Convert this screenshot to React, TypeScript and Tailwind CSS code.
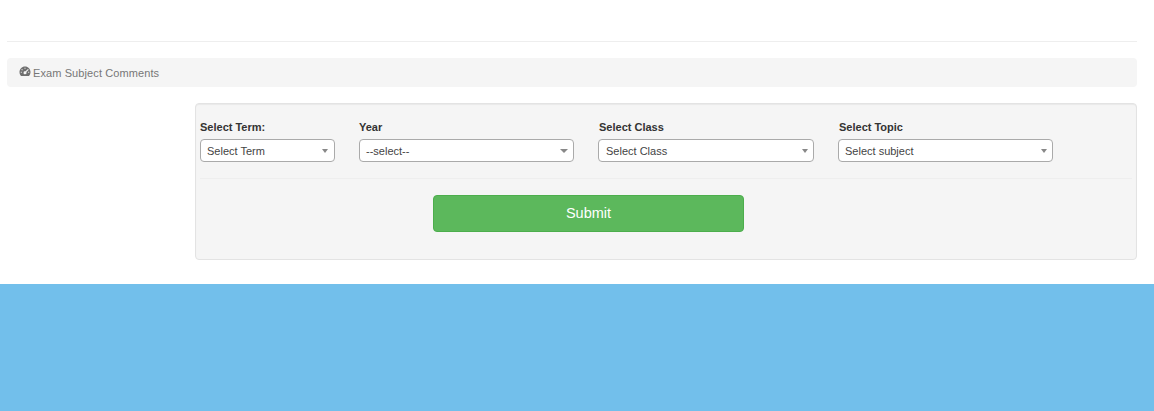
const fields = [
  { label: "Select Term:", value: "Select Term", width: "w-[135px]", labelPad: "pl-0", box: "pl-[6px] pr-[6px]", caret: "border-x-[3px] border-t-[4px]" },
  { label: "Year", value: "--select--", width: "w-[215px]", labelPad: "pl-0", box: "pl-[6px] pr-[5px]", caret: "border-x-[4px] border-t-[4px]" },
  { label: "Select Class", value: "Select Class", width: "w-[216px]", labelPad: "pl-[1px]", box: "pl-[7px] pr-[5px]", caret: "border-x-[3px] border-t-[4px]" },
  { label: "Select Topic", value: "Select subject", width: "w-[215px]", labelPad: "pl-[1px]", box: "pl-[6px] pr-[5px]", caret: "border-x-[3px] border-t-[4px]" },
];

function DashboardIcon() {
  return (
    <svg viewBox="0 0 12 11" className="mb-[4px] mr-[2px] h-[11px] w-[12px] text-[#6f6f6f]">
      <path
        fill="currentColor"
        fillRule="evenodd"
        d="M6 .5C2.800.5.500 3 .500 6c0 1.600.600 3 1.600 4h7.800c1-1 1.600-2.400 1.600-4C11.500 3 9.200.5 6 .5ZM5.500 1.800h1v1h-1ZM3 3l.8.7-.7.8-.8-.7ZM9 3l.7.7-2.300 2.400a1.500 1.500 0 1 1-.9-.8ZM1.800 5.800h1v1h-1ZM9.200 5.800h1v1h-1Z"
      />
    </svg>
  );
}

export default function App() {
  return (
    <div className="flex h-[411px] flex-col overflow-hidden bg-white font-['Liberation_Sans',Arial,sans-serif] text-[11px] text-[#333]">
      <main className="h-[284px] pl-[7px] pr-[17px] pt-[41px]">
        <hr className="border-t border-[#eeeeee]" />
        <div className="mt-4 flex h-[29px] items-center rounded bg-[#f5f5f5] pl-3 pt-[1px] tracking-[0.1px] text-[#777]">
          <DashboardIcon />
          <span>Exam Subject Comments</span>
        </div>

        <section className="ml-[188px] mt-4 h-[157px] rounded border border-[#e3e3e3] bg-[#f5f5f5] px-1 pt-[17px] shadow-[inset_0_1px_1px_rgba(0,0,0,0.05)]">
          <div className="flex gap-6">
            {fields.map((f) => (
              <div key={f.label} className={f.width}>
                <label className={`mb-[5px] block text-[11px] font-bold leading-[13px] text-[#333] ${f.labelPad}`}>
                  {f.label}
                </label>
                <div className={`flex h-[23px] items-center justify-between rounded-[4px] border border-[#aaaaaa] bg-white text-[#444] ${f.box}`}>
                  <span className="pt-[2px]">{f.value}</span>
                  <span className={`mt-[1px] h-0 w-0 border-x-transparent border-t-[#888] ${f.caret}`} />
                </div>
              </div>
            ))}
          </div>
          <hr className="mt-4 border-t border-[#eeeeee]" />
          <button className="ml-[233px] mt-4 block h-[37px] w-[311px] rounded-[4px] border border-[#4cae4c] bg-[#5cb85c] text-[14.5px] text-white">
            Submit
          </button>
        </section>
      </main>
      <footer className="flex-1 bg-[#72bfeb]" />
    </div>
  );
}
